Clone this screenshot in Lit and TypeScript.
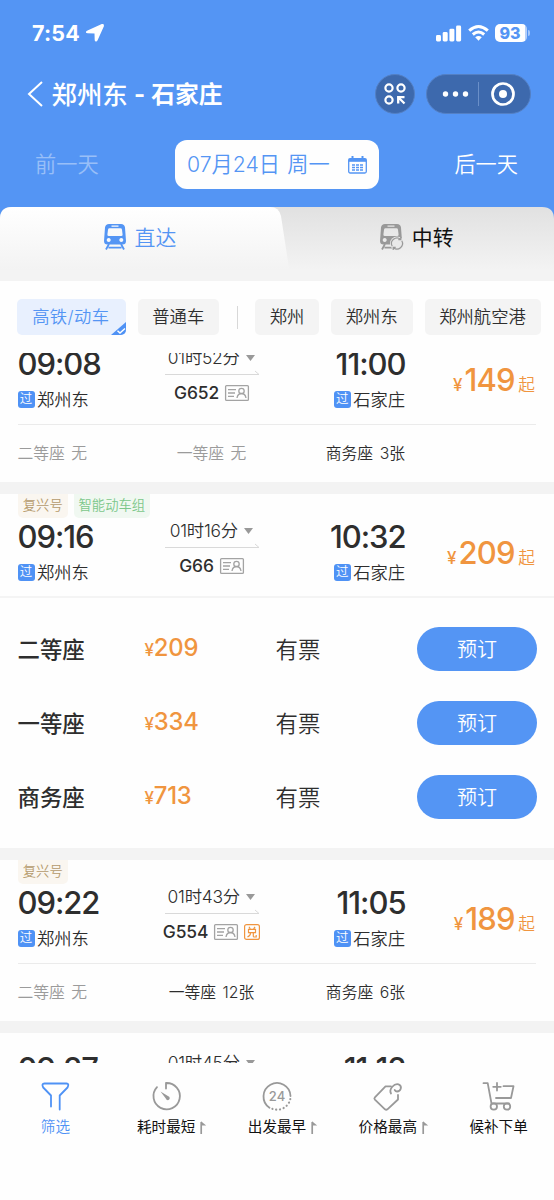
import { LitElement, html, css, svg, nothing } from "lit";
import { customElement, property } from "lit/decorators.js";
import { classMap } from "lit/directives/class-map.js";

interface Seat { name: string; left: string; price?: number; }
interface Train {
  depart: string; arrive: string; duration: string; code: string;
  price: number; tags: { text: string; tone: string }[];
  redeem?: boolean; open?: boolean; seats: Seat[];
}

const FUXING = { text: "复兴号", tone: "gold" };
const TRAINS: Train[] = [
  { depart: "09:08", arrive: "11:00", duration: "01时52分", code: "G652", price: 149, tags: [],
    seats: [{ name: "二等座", left: "无" }, { name: "一等座", left: "无" }, { name: "商务座", left: "3张" }] },
  { depart: "09:16", arrive: "10:32", duration: "01时16分", code: "G66", price: 209, open: true,
    tags: [FUXING, { text: "智能动车组", tone: "green" }],
    seats: [{ name: "二等座", left: "有票", price: 209 }, { name: "一等座", left: "有票", price: 334 }, { name: "商务座", left: "有票", price: 713 }] },
  { depart: "09:22", arrive: "11:05", duration: "01时43分", code: "G554", price: 189, redeem: true, tags: [FUXING],
    seats: [{ name: "二等座", left: "无" }, { name: "一等座", left: "12张" }, { name: "商务座", left: "6张" }] },
  { depart: "09:27", arrive: "11:12", duration: "01时45分", code: "", price: 0, tags: [], seats: [] },
];

const base = css`
  * { box-sizing: border-box; }
  svg { display: block; flex: none; overflow: visible; }
`;

@customElement("train-card")
class TrainCard extends LitElement {
  @property({ attribute: false }) train!: Train;

  static styles = [base, css`
    :host { display: block; background: #fefefe; border-bottom: 12px solid #f3f3f3; color: #2e2e2e; }
    .tags { display: flex; gap: 6px; height: 24px; padding-left: 17.5px; }
    .tags.empty { height: 17px; }
    .tag { height: 23.5px; padding: 0 5.3px; border-radius: 0 0 5px 5px; font-size: 13.3px; line-height: 23.5px; }
    .gold { background: #faf6f0; color: #b59a6c; }
    .green { background: #f0f8f1; color: #7cc78a; padding: 0 4.6px; }
    .main, .seats { display: grid; grid-template-columns: 147px 94px 146.5px 1fr; padding: 0 19px 0 17.5px; }
    .main { height: 79px; }
    .time { height: 38px; line-height: 37px; font-size: 31px; font-weight: 500; letter-spacing: -1.05px; }
    .right { text-align: right; }
    .right .time { margin-right: -0.5px; }
    .station { display: flex; align-items: center; gap: 2.5px; height: 32px; font-size: 17.3px; line-height: 32px; padding-top: 1px; }
    .right .station { justify-content: flex-end; }
    .pass { width: 17px; height: 17px; border-radius: 3px; background: #4f92f5; color: #fff; font-size: 12.5px; line-height: 16.5px; text-align: center; }
    .mid { display: flex; flex-direction: column; align-items: center; }
    .dur { display: flex; align-items: center; gap: 6.5px; height: 25px; font-size: 17.4px; line-height: 25px; white-space: nowrap; letter-spacing: -0.25px; }
    .code { display: flex; align-items: center; gap: 6px; height: 35px; font-size: 17.4px; line-height: 35px; font-weight: 500; white-space: nowrap; letter-spacing: -0.1px; }
    .fare { display: flex; justify-content: flex-end; align-items: baseline; padding-top: 13.5px; color: #f0953f; line-height: 42px; }
    .yen { font-size: 17px; font-weight: 500; }
    .sum { font-size: 31px; font-weight: 500; letter-spacing: -0.8px; margin: 0 3.5px 0 2px; }
    .from { font-size: 16.7px; }
    .line { height: 1px; margin: 0 18px; background: #ebebeb; }
    .seats { height: 57px; line-height: 57px; font-size: 15.8px; white-space: pre; word-spacing: 2px; }
    .seats :nth-child(2) { text-align: center; }
    .seats :nth-child(3) { text-align: right; }
    .none { color: #9b9b9b; }
    .panel { border-top: 2px solid #f4f4f4; margin-top: -1px; padding: 14px 17px 14px 17.5px; }
    .row { display: grid; grid-template-columns: 127px 131px 1fr 120px; align-items: center; height: 74px; font-size: 22.4px; line-height: 40px; }
    .name { font-weight: 450; }
    .name, .avail { padding-top: 1px; }
    .cost { color: #f0953f; font-size: 23.8px; font-weight: 500; letter-spacing: -0.2px; }
    .cost small { font-size: 17px; }
    .book { height: 44.5px; border: 0; border-radius: 23px; background: #5495f4; color: #fff; font: inherit; font-size: 20px; line-height: 44px; padding: 1px 0 0; }
  `];

  private stop(time: string, name: string, right = false) {
    return html`<div class=${classMap({ right })}>
      <div class="time">${time}</div>
      ${this.train.code ? html`<div class="station"><span class="pass">过</span>${name}</div>` : nothing}
    </div>`;
  }

  render() {
    const t = this.train;
    return html`
      <div class=${classMap({ tags: true, empty: !t.tags.length })}>
        ${t.tags.map((g) => html`<span class="tag ${g.tone}">${g.text}</span>`)}
      </div>
      <div class="main">
        ${this.stop(t.depart, "郑州东")}
        <div class="mid">
          <div class="dur">${t.duration}<svg width="9" height="6"><path d="M0 0h9L4.500 6z" fill="#999"/></svg></div>
          <svg width="94" height="5" fill="none" stroke="#d9d9d9"><path d="M0 4.500H94L90 1"/></svg>
          ${t.code ? html`<div class="code">${t.code}
            <svg width="24" height="16" fill="none" stroke="#a3a3a3" stroke-width="1.300"><rect x=".6" y=".6" width="22.800" height="14.800" rx="1"/><path d="M3 4.700h8M3 8h7M3 11.300h6"/><circle cx="16.500" cy="6" r="2.700"/><path d="M12 13c.5-3 2-4.500 4.500-4.500S20.500 10 21 13"/></svg>
            ${t.redeem ? html`<svg width="16" height="16" fill="none" stroke="#f0953f" stroke-width="1.200"><rect x=".6" y=".6" width="14.800" height="14.800" rx="2"/><path d="M5 2.800l1.200 2M11 2.800l-1.300 2M4.500 5.300h7v3.400h-7zM6.600 8.700c0 2-1 3.300-3.100 4.200M9.300 8.700v3.500c0 .6.3.8.9.8h2V11"/></svg>` : nothing}
          </div>` : nothing}
        </div>
        ${this.stop(t.arrive, "石家庄", true)}
        ${t.price ? html`<div class="fare"><span class="yen">¥</span><span class="sum">${t.price}</span><span class="from">起</span></div>` : nothing}
      </div>
      ${t.open
        ? html`<div class="panel">${t.seats.map((s) => html`<div class="row">
            <span class="name">${s.name}</span><span class="cost"><small>¥</small>${s.price}</span><span class="avail">${s.left}</span><button class="book">预订</button>
          </div>`)}</div>`
        : html`<div class="line"></div><div class="seats">${t.seats.map((s) => html`<span class=${classMap({ none: s.left === "无" })}>${s.name} ${s.left}</span>`)}</div>`}
    `;
  }
}

const TRAIN_BODY = svg`<path fill-rule="evenodd" d="M5 0H17Q20.500 0 21 3.500L22 17Q22 20.500 18.500 20.500H3.500Q0 20.500 0 17L1 3.500Q1.500 0 5 0zM7.500 1.500v1.300h7V1.500zM5.500 4.300Q4.200 4.300 4 5.700L3.400 10.500Q3.300 12 4.800 12H17.200Q18.700 12 18.600 10.500L18 5.700Q17.800 4.300 16.500 4.300zM4.700 14a2 2 0 1 0 .01 0zM17.300 14a2 2 0 1 0 .01 0z"/>`;

const NAV = [
  { label: "筛选", active: true, arrow: false, icon: svg`<path d="M10 24.500V13.500L2.200 5.500Q.2 1.500 3.500 1.500H25.500Q28.500 1.500 26.500 5.500L18.700 13.500V27.500"/>` },
  { label: "耗时最短", arrow: true, icon: svg`<path d="M14 6.500V1a13.200 13.200 0 1 1-9 4.200"/><path d="M8.500 9.500l7.800 4.700a2 2 0 1 1-2.500 2.400z" fill="currentColor" stroke="none"/>` },
  { label: "出发最早", arrow: true, icon: svg`<path d="M6.500 25.700A13.500 13.500 0 1 1 27.500 14"/><path d="M27.300 17A13.500 13.500 0 0 1 9 26.700" stroke-dasharray=".2 3.600" stroke-width="2.100"/><text x="14" y="19" text-anchor="middle" font-size="13" font-weight="500" fill="currentColor" stroke="none">24</text>` },
  { label: "价格最高", arrow: true, icon: svg`<path d="M17 4.300H11.500L.9 15.300Q-.2 16.500.9 17.700L11 27.300Q12.200 28.300 13.400 27.300L24 17.500V13"/><path d="M17 11.500C14.500 7 20.500 1 24.500 2.300C29 4.500 26.500 9.500 23 9.500C22 9.500 21.200 8.800 20.700 8"/>` },
  { label: "候补下单", arrow: false, icon: svg`<path d="M-1.500 1.200H2.700L6.500 21.500H24M18.500 4.200H28.500L26 16H11M12 1v7.500M8.200 4.800h7.600"/><circle cx="8.800" cy="24.500" r="3.200"/><circle cx="22" cy="24.500" r="3.200"/>` },
];

@customElement("app-root")
class AppRoot extends LitElement {
  static styles = [base, css`
    :host { display: flex; flex-direction: column; width: 554px; height: 1200px; overflow: hidden; background: #fefefe; color: #2e2e2e; font-family: Inter, "Noto Sans CJK SC", sans-serif; font-weight: 350; }
    header { height: 207px; flex: none; background: #5495f4; color: #fff; }
    .status { display: flex; align-items: center; height: 66px; padding: 0 24px 0 32px; }
    .clock { font-size: 21.5px; font-weight: 700; letter-spacing: 0.2px; margin-right: 6px; }
    .spacer { flex: 1; }
    .signals { display: flex; align-items: center; gap: 6px; }
    .battery { display: flex; align-items: center; gap: 1px; }
    .level { width: 32px; height: 18px; border-radius: 5px; background: linear-gradient(90deg, #fff 93%, #b5d0fa 93%); color: #5495f4; font-size: 16px; font-weight: 800; line-height: 18px; padding-right: 2px; text-align: center; }
    .nub { width: 2px; height: 6px; border-radius: 0 2px 2px 0; background: #a5c7fa; }
    .bar { display: flex; align-items: center; height: 56px; padding: 0 23px 0 27px; }
    .title { display: flex; align-items: center; margin-left: 8.5px; padding-top: 1px; font-size: 25.4px; font-weight: 500; line-height: 40px; white-space: nowrap; }
    .title b { font-size: 23.8px; font-weight: 700; white-space: pre; word-spacing: 0.6px; }
    .round { display: grid; place-items: center; width: 40px; height: 40px; border-radius: 50%; background: #3d69ad; border: 1px solid #5480c4; margin-right: 11px; }
    .capsule { display: flex; align-items: center; width: 105.500px; height: 40px; border-radius: 20px; background: #3d69ad; border: 1px solid #5480c4; padding-left: 16px; }
    .days { display: grid; grid-template-columns: 140px 204px 1fr; align-items: center; padding: 18px 36px 0 35px; font-size: 21.2px; line-height: 47px; }
    .prev { opacity: .4; }
    .next { text-align: right; }
    .date { display: flex; align-items: center; justify-content: space-between; height: 49px; padding: 0 12.5px 0 12px; border-radius: 12px; background: #fefefe; color: #5495f4; font-size: 21.2px; white-space: nowrap; word-spacing: 1.5px; }
    .tabs { display: grid; grid-template-columns: 280px 1fr; height: 74px; flex: none; background: #5495f4; }
    .strip { grid-area: 1 / 1 / 2 / 3; }
    .tab { display: flex; align-items: center; justify-content: center; gap: 9px; grid-row: 1; height: 60px; font-size: 20.9px; line-height: 30px; z-index: 1; }
    .tab span { padding-top: 1px; }
    .tab.on { grid-column: 1; color: #5495f4; }
    .tab.off { grid-column: 2; color: #111; font-weight: 400; }
    .chips { display: flex; align-items: center; flex: none; height: 72px; padding: 0 0 0 17px; font-size: 17.3px; }
    .chip { position: relative; display: grid; place-items: center; height: 36.5px; line-height: 36px; border-radius: 5px; background: #f4f4f4; margin-right: 12px; overflow: hidden; white-space: nowrap; }
    .c2 { width: 64px; } .c3 { width: 81.5px; } .c5 { width: 116px; }
    .chip.on { width: 108.5px; padding-right: 1px; background: #e8f0fe; color: #5495f4; letter-spacing: 0.4px; }
    .tick { position: absolute; right: 0; bottom: 0; }
    .rule { width: 1px; height: 23px; background: #d8d8d8; margin: 0 17px 0 6px; }
    .list { flex: 1; min-height: 0; overflow: hidden; }
    .inner { margin-top: -25px; }
    nav { display: grid; grid-template-columns: repeat(5, 1fr); height: 137px; flex: none; padding-top: 19px; background: #fefefe; }
    .item { display: flex; flex-direction: column; align-items: center; color: #999; }
    .label { position: relative; margin-top: 4.5px; color: #111; font-size: 14.6px; line-height: 24px; font-weight: 400; }
    .active, .active .label { color: #4f92f5; font-weight: 350; }
    .arrow { position: absolute; right: -11px; top: 6px; }
  `];

  render() {
    return html`
      <header>
        <div class="status">
          <span class="clock">7:54</span>
          <svg width="18" height="18" fill="#fff"><path d="M15.800.1Q18.600-.5 17.900 2.200L11.600 16.200Q10.700 18 9.300 17.300Q8.700 17 8.700 16L8.500 9.500L1.600 9.300Q-.8 9 .3 7.200Q.6 6.800 1.500 6.400z"/></svg>
          <span class="spacer"></span>
          <div class="signals">
            <svg width="26" height="17" fill="#fff"><rect y="10" width="5" height="6.500" rx="1.400"/><rect x="6.700" y="7" width="5" height="9.500" rx="1.400"/><rect x="13.400" y="3.700" width="5" height="12.800" rx="1.400"/><rect x="20.100" y=".5" width="5" height="16" rx="1.400"/></svg>
            <svg width="21" height="16" fill="none" stroke="#fff" stroke-width="3"><path d="M1.200 5.700Q10.500-2.600 19.800 5.700M4.800 9.500Q10.500 4.500 16.200 9.500"/><path d="M7.200 12.300Q10.500 9.800 13.800 12.300L10.500 15.800z" fill="#fff" stroke="none"/></svg>
            <div class="battery"><span class="level">93</span><span class="nub"></span></div>
          </div>
        </div>
        <div class="bar">
          <svg width="16" height="26" fill="none" stroke="#fff" stroke-width="2"><path d="M15 1L2 13L15 25"/></svg>
          <div class="title">郑州东<b> - 石家庄</b></div>
          <span class="spacer"></span>
          <div class="round"><svg width="22" height="22" fill="none" stroke="#fff" stroke-width="2.200"><circle cx="5" cy="5" r="3.600"/><circle cx="17" cy="5" r="3.600"/><circle cx="5" cy="17" r="3.600"/><path d="M20.500 20.500L15 15M14.200 20.500V14.200H20.500" stroke-width="2.300"/></svg></div>
          <div class="capsule"><svg width="72" height="26" fill="#fff"><circle cx="2.500" cy="13" r="2.700"/><circle cx="12.500" cy="13" r="2.700"/><circle cx="22.500" cy="13" r="2.700"/><path d="M35.500 1v24" stroke="#6a8fc8"/><circle cx="60" cy="13" r="4"/><circle cx="60" cy="13" r="10.500" fill="none" stroke="#fff" stroke-width="2.700"/></svg></div>
        </div>
        <div class="days">
          <span class="prev">前一天</span>
          <div class="date"><span>07月24日 周一</span>
            <svg width="19" height="18" fill="none" stroke="#5495f4"><rect x=".7" y="2.700" width="17.600" height="14.300" rx="1.500" stroke-width="1.300"/><path d="M.7 4.300h17.600" stroke-width="3"/><path d="M4.500 0v4M14.500 0v4" stroke-width="2"/><path d="M4 9h11M4 11.500h11M4 14h11" stroke-width="1.300" stroke-dasharray="3 1"/></svg>
          </div>
          <span class="next">后一天</span>
        </div>
      </header>
      <div class="tabs">
        <svg class="strip" width="554" height="74">
          <defs>
            <linearGradient id="off" x2="0" y2="1"><stop stop-color="#e1e1e1"/><stop offset=".85" stop-color="#f3f3f3"/></linearGradient>
            <linearGradient id="on" x2="0" y2="1"><stop stop-color="#fff"/><stop offset=".85" stop-color="#f3f3f3"/></linearGradient>
          </defs>
          <path d="M0 74V12Q0 0 12 0H542Q554 0 554 12V74z" fill="url(#off)"/>
          <path d="M0 74V12Q0 0 12 0H270Q279 0 281 9L291 74z" fill="url(#on)"/>
        </svg>
        <div class="tab on"><svg width="22" height="26" fill="#5495f4">${TRAIN_BODY}<path d="M5 20L2 25.500M17 20L20 25.500M4.500 23.700h13" stroke="#5495f4" stroke-width="1.800" fill="none"/></svg><span>直达</span></div>
        <div class="tab off"><svg width="22.500" height="26" fill="#999">${TRAIN_BODY}<path d="M5 20L2 25.500M4.500 23.700h8" stroke="#999" stroke-width="1.800" fill="none"/><circle cx="17" cy="19.500" r="7" fill="#e9e9e9"/><path d="M12.200 22.200a5.500 5.500 0 0 1 8.300-6.900M21.800 16.800a5.500 5.500 0 0 1-8.300 6.900M20.800 13v2.600h-2.500M13.200 26v-2.600h2.500" fill="none" stroke="#999" stroke-width="1.200"/></svg><span>中转</span></div>
      </div>
      <div class="chips">
        <div class="chip on">高铁/动车<svg class="tick" width="15" height="13"><path d="M0 13L15 0V13z" fill="#4f92f5"/><path d="M6.500 8.800l2.500 2.300L14 6.500" fill="none" stroke="#fff" stroke-width="1.500"/></svg></div>
        <div class="chip c3">普通车</div>
        <span class="rule"></span>
        <div class="chip c2">郑州</div>
        <div class="chip c3">郑州东</div>
        <div class="chip c5">郑州航空港</div>
      </div>
      <div class="list"><div class="inner">${TRAINS.map((t) => html`<train-card .train=${t}></train-card>`)}</div></div>
      <nav>
        ${NAV.map((n) => html`<div class=${classMap({ item: true, active: !!n.active })}>
          <svg width="28" height="28" fill="none" stroke="currentColor" stroke-width="1.800" stroke-linecap="round" stroke-linejoin="round">${n.icon}</svg>
          <span class="label">${n.label}${n.arrow ? html`<svg class="arrow" width="6" height="13"><path d="M1.200 13V1" stroke="#999" stroke-width="1.700"/><path d="M1 .3L6.200 4.600H1z" fill="#999"/></svg>` : nothing}</span>
        </div>`)}
      </nav>
    `;
  }
}
